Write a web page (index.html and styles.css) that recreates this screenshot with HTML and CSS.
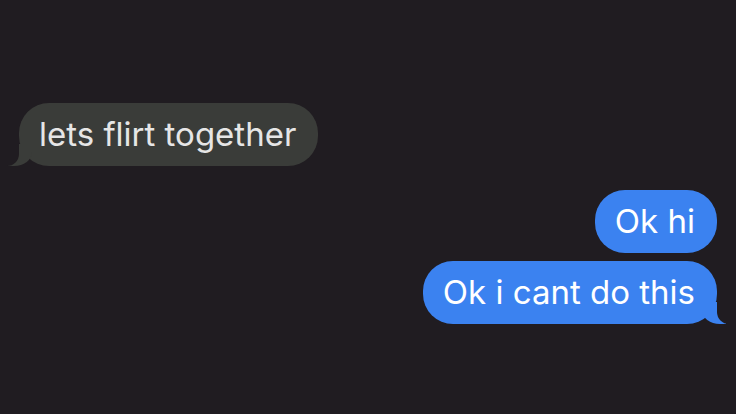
FILE: index.html
```html
<!DOCTYPE html>
<html>
<head>
<meta charset="utf-8">
<title>Messages</title>
<link rel="stylesheet" href="styles.css">
</head>
<body>
	<div class="thread">
		<div class="msg msgIn tail">lets flirt together</div>
		<div class="msg msgOut first">Ok hi</div>
		<div class="msg msgOut tail">Ok i cant do this</div>
	</div>
</body>
</html>
```

FILE: styles.css
```css
html, body{
	margin: 0;
	height: 100%;
	background: #201c21;
}
.thread{
	display: flex;
	flex-direction: column;
	padding: 103px 19px 0 19px;
	font-family: Inter, "Liberation Sans", sans-serif;
}
.msg{
	position: relative;
	max-width: 70%;
	padding: 12px 22px 13px 20px;
	border-radius: 30px;
	font-size: 33px;
	line-height: 38px;
}
.msgIn{
	align-self: flex-start;
	background: #3a3c39;
	color: #e6e6e6;
}
.msgOut{
	align-self: flex-end;
	background: #3b82f0;
	color: #fff;
}
.msgOut.first{
	margin-top: 24px;
	margin-bottom: 8px;
}
/* bubble tails */
.tail::before,
.tail::after{
	content: "";
	position: absolute;
	bottom: 0;
	height: 22px;
}
.msgIn.tail::before{
	left: -11px;
	width: 24px;
	background: #3a3c39;
	border-bottom-right-radius: 18px 14px;
}
.msgIn.tail::after{
	left: -30px;
	width: 30px;
	background: #201c21;
	border-bottom-right-radius: 12px;
}
.msgOut.tail::before{
	right: -9px;
	width: 24px;
	background: #3b82f0;
	border-bottom-left-radius: 18px 14px;
}
.msgOut.tail::after{
	right: -28px;
	width: 28px;
	background: #201c21;
	border-bottom-left-radius: 12px;
}
```
